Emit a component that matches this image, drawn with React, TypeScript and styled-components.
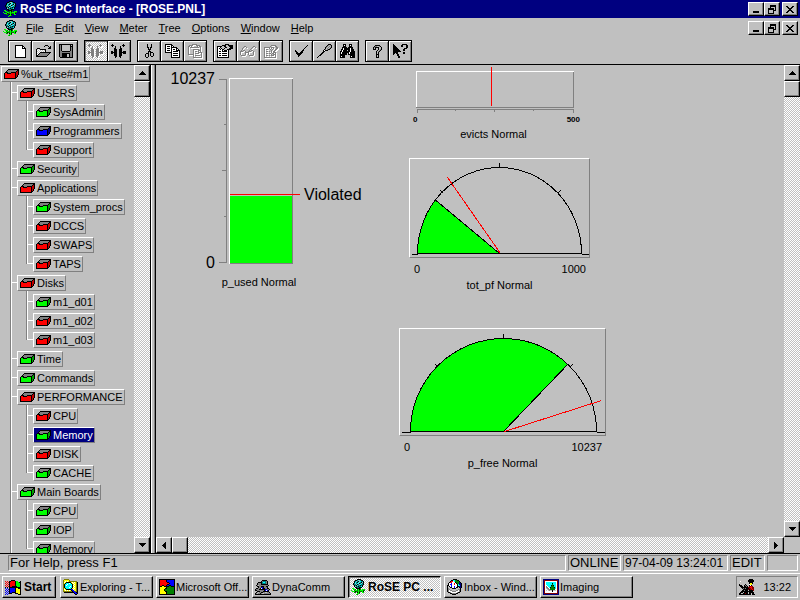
import React from "react";
import styled, { createGlobalStyle, css } from "styled-components";

const FACE = "#c0c0c0";
const SHADE = "#808080";
const NAVY = "#000080";
const LIME = "#00ff00";
const SANS = `"Liberation Sans", Arial, sans-serif`;

const Global = createGlobalStyle`
  *, *::before, *::after { box-sizing: border-box; }
  html, body { margin: 0; padding: 0; }
  body { background: ${FACE}; color: #000; font: 11px/16px ${SANS}; overflow: hidden; }
  button { font: inherit; color: inherit; margin: 0; padding: 0; border: 0; background: ${FACE}; border-radius: 0; }
  svg { display: block; flex: none; }
  ul { list-style: none; margin: 0; padding: 0; }
`;

const raised = css`
  border: 1px solid;
  border-color: #fff #000 #000 #fff;
  box-shadow: inset -1px -1px 0 ${SHADE};
`;
const sunken = css`
  border: 1px solid;
  border-color: ${SHADE} #fff #fff ${SHADE};
`;
const dither = css`
  background: repeating-conic-gradient(#fff 0 25%, ${FACE} 0 50%) 0 0 / 2px 2px;
`;

/* ---------- pixel drawings ---------- */

const PALETTE: Record<string, string> = {
  K: "#000", W: "#fff", G: SHADE, L: FACE, T: "#008080", C: "#80d0d0", A: "#00ffff",
  E: "#008000", M: LIME, R: "#ff0000", D: "#800000", B: "#0000ff", N: NAVY, Y: "#ffff00", O: "#808000",
};

interface SpriteProps { rows: string[]; colors?: Record<string, string> }

function Sprite({ rows, colors }: SpriteProps) {
  const width = Math.max(...rows.map((r) => r.length));
  const rects: React.ReactElement[] = [];
  rows.forEach((row, y) => {
    let x = 0;
    while (x < row.length) {
      const c = row[x];
      let end = x + 1;
      while (end < row.length && row[end] === c) end++;
      const fill = colors?.[c] ?? PALETTE[c];
      if (fill) rects.push(<rect key={`${x}-${y}`} x={x} y={y} width={end - x} height={1} fill={fill} />);
      x = end;
    }
  });
  return (
    <svg width={width} height={rows.length} shapeRendering="crispEdges" aria-hidden="true">{rects}</svg>
  );
}

const ROSE = [
  "......KKKK......",
  "....KKTCCTKK....",
  "...KTCTKCATTK...",
  "...KATKACTKCK...",
  "..KTCTACKTCTK...",
  "..KTTCKTCATTK...",
  "...KTKCTTKTK....",
  "...KCTTKTTAK....",
  "....KKTTKKK.....",
  ".MM..KKKKE......",
  "..MME.EMKE.MMM..",
  "M..EMMEMEMMMEE..",
  ".MMMKEEMEEEMK...",
  "...EE.KMK..MM...",
  "......MME.......",
  ".....ME.........",
];

const PAGE = [
  "KKKKKKKK...", "KWWWWWWKK..", "KWWWWWWKWK.", "KWWWWWWKKKK",
  ...Array(8).fill("KWWWWWWWWWK"), "KKKKKKKKKKK",
];
const OPEN = [
  "..........KKK....",
  ".........K...K.K.",
  "..............KK.",
  "..KKK........KKK.",
  ".KLWLKKKKKK......",
  ".KWLWLWLWLK......",
  ".KLWLWLWLWK......",
  ".KWLWKKKKKKKKKKK.",
  ".KLWKGGGGGGGGGK..",
  ".KWKGGGGGGGGGK...",
  ".KKGGGGGGGGGK....",
  ".KKKKKKKKKKK.....",
];
const SAVE = [
  "KKKKKKKKKKKKKK", "KGKLLLLLLLLKLK", "KGKLLLLLLLLKKK", "KGKLLLLLLLLKGK",
  "KGKLLLLLLLLKGK", "KGKLLLLLLLLKGK", "KGKLLLLLLLLKGK", "KGGKKKKKKKKGGK",
  "KGGGGGGGGGGGGK", "KGGKKKKKKKKGGK", "KGGKKKKKLLKGGK", "KGGKKKKKLLKGGK",
  "KGGKKKKKLLKGGK", ".KKKKKKKKKKKKK",
];
const PLUG = [
  ".X..........X...",
  "XXX........XXX..",
  ".X..X....X..X...",
  "....X....X......",
  "...XX....XX.....",
  "...XXX..XXX.....",
  "...XXX..XXX.....",
  "XX.XXX..XXX.XXX.",
  "XXXXXX..XXXXXXX.",
  "XX.XXX..XXX.XXX.",
  "...XXX..XXX.....",
  "...XXX..XXX.....",
  "....XX..XX......",
  "....X....X......",
];
const CUT = [
  "..K...K..", "..K...K..", "..K...K..", "..KK.KK..", "...K.K...", "...KKK...", "....K....",
  "...KKK...", "...K.KKK.", ".KKK.K..K", "K..K.K..K", "K..K.K..K", "K..K..KK.", ".KK......",
];
const COPY = [
  "KKKKKKK.......", "KWWWWWKK......", "KWKKKWKWK.....", "KWWWWWKKKKKK..", "KWKKKWKWWWWKK.",
  "KWWWWWKWKKWKWK", "KWKKKWKWWWWKKKK", "KWWWWWKWKKKKKWK", "KKKKKKKWWWWWWWK", "......KWKKKKKWK",
  "......KWWWWWWWK", "......KWKKKKKWK", "......KWWWWWWWK", "......KKKKKKKKK",
];
const PASTE = [
  "....GGGGG......", ".GGGG...GGGG...", "GG.G.....G.GG..", "G.GGGGGGGGG.G..", "G...........G..",
  "G....GGGGGG.G..", "G....G....GGG..", "G....G.GG.G.G..", "G....G....GGGG.", "G....G.GGGG..G.",
  "GGGGGG.......G.", ".....G.GGGGG.G.", ".....G.......G.", ".....GGGGGGGGG.",
];
const PROPS = [
  "........KKKK....",
  ".....KKKKLLKKKKK",
  "KKKKKLLKKLLLKKKK",
  "KWWKLLLLKKLLLKKK",
  "KWKLKLLKLLLLKKKK",
  "KWWKWKKLLLKKKK..",
  "KWWWWKWKKKWK....",
  "KWKKWKKKKKWK....",
  "KWWWWWWWWWWK....",
  "KWKKWKKKKKWK....",
  "KWWWWWWWWWWK....",
  "KWKKWKKKKKWK....",
  "KWWWWWWWWWWK....",
  "KKKKKKKKKKKK....",
];
const GLASSES = [
  "....GG.......GG.",
  "...G..G.....G..G",
  "..G........G....",
  "..G.......G.....",
  ".G.GG....G.GG...",
  "GGG..G..GGG..G..",
  "G....GGGG....G..",
  "G....G..G....G..",
  "G....G..G....G..",
  ".GGGG....GGGG...",
];
const QUERYFORM = [
  ".......GGGGG...",
  "......G....GG..",
  "GGGGGG.GGG..GG.",
  "G....G.G.G..GG.",
  "G.GG..G.G..GG..",
  "G......G..GG...",
  "G.GG.G.G.GG....",
  "G......G.GGG...",
  "G.GG.GG.GG.G...",
  "G......G.GGG...",
  "G.GG.G.GGG.G...",
  "G..........G...",
  "GGGGGGGGGGGG...",
];
const CHECK = [
  "............K", "...........K.", "..........K..", ".........K...", "........K....", "K......KK....",
  "KK....KK.....", ".KK..KKK.....", ".KKKKKK......", "..KKKK.......", "...KK........", "...K.........",
];
const DRIVER = [
  "...........KKK.", "..........KGLGK", ".........KGLGLK", "........KGLGLGK", "........KLGLGK.",
  ".......KGLGKK..", "......KWKKK....", "......KK.......", ".....KK........", "....KK.........",
  "...KK..........", "..KK...........", ".K.............", "K..............",
];
const BINOCULARS = [
  "...KKK...KKK...", "...KWK...KWK...", "...KKK...KKK...", "..KKKKK.KKKKK..", "..KWKKKKKKWKK..",
  ".KKWKKKKKKWKKK.", ".KWKKKK.KKWKKK.", "KKWKKKKKKKWKKKK", "KWKKKKKKKWKKKKK", "KWKKKKK.KWKKKKK",
  "KKKKKKK.KKKKKKK", "KKKKK.....KKKKK", "KWKKK.....KWKKK", "KKKKK.....KKKKK",
];
const HELP = [
  "...KKKKK..", "..KGGLLGK.", ".KGKKKKLLK", ".KLK..KLLK", ".KKK..KLGK", ".....KLGK.", "....KLGK..",
  "....KLK...", "....KLK...", "....KKK...", "....KLK...", "....KLK...", "....KKK...",
];
const CONTEXT = [
  "K........KKKKK.", "KK......KK...KK", "KKK.....KK...KK", "KKKK.........KK", "KKKKK......KKK.",
  "KKKKKK....KK...", "KKKKKKK...KK...", "KKKKKKKK.......", "KKKKK.....KK...", "KK.KK.....KK...",
  "K...KK.........", "....KK.........", ".....KK........", ".....KK........",
];

const TRAY_BOX = [
  "....KKKKKKKKKKK",
  "...KGGGGGGGGGKK",
  "..KGGGGGGGGGKdK",
  ".KKKGGGKKKKKddK",
  "KccKKKKccccKddK",
  "KccccccccccKddK",
  "KccccccccccKdK.",
  "KccccccccccKdK.",
  "KccccccccccKK..",
  "KKKKKKKKKKKK...",
];

const MIN = ["......", "......", "......", "......", "......", "......", "KKKKKK", "KKKKKK"];
const RESTORE = ["..KKKKKK", "..KKKKKK", "..K....K", "KKKKKK.K", "KKKKKK.K", "K....KKK", "K....K..", "K....K..", "KKKKKK.."];
const CLOSE = ["KK....KK", ".KK..KK.", "..KKKK..", "...KK...", "..KKKK..", ".KK..KK.", "KK....KK"];

const ARROWS: Record<string, string[]> = {
  up: ["...K...", "..KKK..", ".KKKKK.", "KKKKKKK"],
  down: ["KKKKKKK", ".KKKKK.", "..KKK..", "...K..."],
  left: ["...K", "..KK", ".KKK", "KKKK", ".KKK", "..KK", "...K"],
  right: ["K...", "KK..", "KKK.", "KKKK", "KKK.", "KK..", "K..."],
};

const FLAG = [
  "......KKKK......",
  "R.R.KKRRRRKMM..K",
  ".R.RKRRRRRKMMMKK",
  "R.R.KRRRRRKMMMMK",
  ".R.RKRRRRRKMMMMK",
  "R.R.KRRRRRKMMMMK",
  ".R.RKRRKKKKKMMMK",
  "K.K.KKKKKKKKKKKK",
  "B.B.KBBBBBKYYKKK",
  ".B.BKBBBBBKYYYYK",
  "B.B.KBBBBBKYYYYK",
  ".B.BKBBBBBKYYYYK",
  "B.B.KBBKKKKYYYYK",
  ".B.BKKK...KKKYYK",
  "B.B..........KKK",
];
const EXPLORER = [
  ".OOOOO..........",
  "OYYYYYO.........",
  "OYWYWYOOOOOOOO..",
  "OWYKKKKKYWYWYOK.",
  "OYKAAAWAKYWYYOK.",
  "OKAAWAAAAKYWYOK.",
  "OKAWAAAAAKWYYOK.",
  "OKAAAAAWAKYWYOK.",
  "OKAAAAWAAKWYYOK.",
  "OYKAAAAAKYYWYOK.",
  "OWYKKKKKBBWYYOK.",
  "OYWYWYWYKBBYYOK.",
  "OOOOOOOOOKBBOOK.",
  ".KKKKKKKKKKBBKK.",
  "...........KBBK.",
  "............KK..",
];
const PUZZLE = [
  "KKKKKKKKKKKKKKKK",
  "KRRRRRRKBBBBBBBK",
  "KRRRRRRKBBBBBBBK",
  "KRRRRRRRKKBBBBBK",
  "KRRRRRRRRRKBBBBK",
  "KRRRRRRRKKBBBBBK",
  "KRRKKRRKBBKKBBBK",
  "KKKYYKKKKKEEKKKK",
  "KYYYYYYKEEEEEEEK",
  "KYYYYYKKEEEEEEEK",
  "KYYYYKEEEEEEEEEK",
  "KYYYYKEEEEEEEEEK",
  "KYYYYYKKEEEEEEEK",
  "KYYYYYYKEEEEEEEK",
  "KYYYYYYKEEEEEEEK",
  "KKKKKKKKKKKKKKKK",
];
const DYNA = [
  ".......KKKKK....",
  "......KGTTTGK...",
  "...KKKKTAATGK...",
  "..KGGGKTTTTGK...",
  "..KGGGKKKKKKK...",
  ".KGLGGGGGGGGGK..",
  "..KKGGKKKGGKK...",
  "...KGGNBKGGGK...",
  ".KKGGKWBKKGGKK..",
  "KGGGKKKKKKNBGGK.",
  "KKGGGGGGGKBWBK..",
  "..KKKGGGKKKKKK..",
  ".KGLGGKKGGLLGGK.",
  "KGLGGKGLLGGGGGGK",
  "KKKKKKKKKKKKKKKK",
];
const INBOX = [
  "......KKKK......",
  "....KKAAEEKK....",
  "...KRRWAEEEEK...",
  "..KRRWWWKEEENK..",
  ".KWWBWWRWKEENNK.",
  ".KWBBWWRWWKANNK.",
  "KKWWBWWWWWKAANK.",
  "KLKWBWWBWWKKNNK.",
  "KLLKKWWBWKKLKNK.",
  "KGLLLKKKKLLLLK..",
  "KGGLLLLLLLLGGK..",
  "KGWGGLLLLGGWGK..",
  "KGWWWGGGGWWWGK..",
  ".KKGWWWWWWGKK...",
  "...KKGGGGKK.....",
  ".....KKKK.......",
];
const IMAGING = [
  "NNNNNNNNNNNNNNNN",
  "NDDDDDDDDDDDDDDN",
  "NDWWWWWWWWWWWWDN",
  "NDWAAAAAAAAAAWDN",
  "NDWAAAAAAKAAAWDN",
  "NDWAAAAAAEAAAWDN",
  "NDWWAAAAKEKAAWDN",
  "NDWGWAAAEEEAAWDN",
  "NDWGGWAKEEEKAWDN",
  "NDWLGGWEEEEEAWDN",
  "NDWWLGGEEEEEWWDN",
  "NDWLWLGLLKLLLWDN",
  "NDWWWWWWWKWWWWDN",
  "NDWWWWWWWWWWWWDN",
  "NDDDDDDDDDDDDDDN",
  "NNNNNNNNNNNNNNNN",
];
const AGENT = [
  "..........KKKK..",
  "L........KKKKKK.",
  "LW.......KKKKKK.",
  "..........KKKK..",
  "..........KYYK..",
  "K.....K...WYY...",
  "KKK..KGK..KWK...",
  ".KKK.KKGK.DDRD..",
  "..KKKKKKKDDRRDD.",
  "...KGKGKKKDDRDD.",
  "....KKKKKDKDDRD.",
  "...KKGKKK.KKKKD.",
  "..KKKKKKKKKKKK..",
  ".KKK.KKKK.KKKKK.",
  "KK..KKDKK.KK.KK.",
  "KKKKKKKKKKKK.KKK",
];

/* ---------- shell ---------- */

const Shell = styled.div`
  display: flex;
  flex-direction: column;
  height: 100vh;
`;

const TitleBar = styled.header`
  display: flex;
  align-items: center;
  height: 18px;
  padding: 0 2px 0 3px;
  gap: 1px;
  background: ${NAVY};
  color: #fff;
`;

const Title = styled.h1`
  flex: 1;
  margin: 0;
  font: bold 12px/16px ${SANS};
`;

const WindowButtons = styled.div`
  display: flex;
`;

const WindowButton = styled.button<{ $apart?: boolean }>`
  ${raised}
  display: grid;
  place-items: center;
  width: 16px;
  height: 14px;
  margin-left: ${(p) => (p.$apart ? 2 : 0)}px;
  overflow: hidden;
`;

const MenuBar = styled.nav`
  display: flex;
  align-items: center;
  height: 20px;
  padding: 0 2px 0 3px;
`;

const Menus = styled.div`
  display: flex;
  flex: 1;
  gap: 11px;
  padding-left: 7px;
`;

const MenuItem = styled.button`
  background: none;
  &::first-letter { text-decoration: underline; }
`;

const Toolbar = styled.div`
  display: flex;
  gap: 6px;
  height: 26px;
  padding: 2px 8px;
`;

const ToolGroup = styled.div`
  display: flex;
`;

const Tool = styled.button<{ $pressed?: boolean }>`
  display: grid;
  place-items: center;
  width: 24px;
  height: 22px;
  border: 1px solid #000;
  box-shadow: inset 1px 1px 0 #fff, inset -1px -1px 0 ${SHADE};
  & + & { margin-left: -1px; }
  &:disabled svg { filter: drop-shadow(1px 1px 0 #fff); }
  ${(p) => p.$pressed && css`${dither} box-shadow: inset 1px 1px 0 ${SHADE};`}
`;

const Workspace = styled.div`
  display: flex;
  flex: 1;
  min-height: 0;
  border-top: 1px solid #000;
  border-bottom: 1px solid #000;
`;

const TreePane = styled.aside`
  display: flex;
  width: 150px;
  flex: none;
`;

const Splitter = styled.div`
  flex: none;
  width: 6px;
  border-left: 1px solid #000;
  border-right: 1px solid #000;
  background: linear-gradient(90deg, #fff 1px, ${FACE} 1px 3px, ${SHADE} 3px);
`;

/* ---------- scroll bars ---------- */

const Track = styled.div<{ $row?: boolean }>`
  ${dither}
  display: flex;
  flex: ${(p) => (p.$row ? "1" : "none")};
  flex-direction: ${(p) => (p.$row ? "row" : "column")};
  & > :last-child { margin-${(p) => (p.$row ? "left" : "top")}: auto; }
`;

const ScrollButton = styled.button`
  ${raised}
  display: grid;
  place-items: center;
  flex: none;
  width: 16px;
  height: 16px;
`;

function ScrollBar({ row, label }: { row?: boolean; label: string }) {
  return (
    <Track $row={row}>
      <ScrollButton aria-label={`${label} back`}><Sprite rows={ARROWS[row ? "left" : "up"]} /></ScrollButton>
      <ScrollButton aria-label={`${label} thumb`} />
      <ScrollButton aria-label={`${label} forward`}><Sprite rows={ARROWS[row ? "right" : "down"]} /></ScrollButton>
    </Track>
  );
}

/* ---------- tree ---------- */

const TreeList = styled.ul`
  flex: 1;
  min-width: 0;
  overflow: hidden;
  padding-left: 1px;
`;

const TreeRow = styled.li`
  display: flex;
  align-items: flex-end;
  height: 19px;
  &:first-child { height: 17px; }
`;

type GuideKind = "pass" | "branch" | "last";

const Guide = styled.span<{ $kind: GuideKind }>`
  flex: none;
  align-self: stretch;
  width: 16px;
  background-repeat: no-repeat;
  background-image:
    linear-gradient(90deg, ${SHADE} 1px, #fff 1px),
    linear-gradient(#fff, #fff);
  background-position: 9px 0, 10px 10px;
  background-size: 2px ${(p) => (p.$kind === "last" ? "11px" : "100%")}, ${(p) => (p.$kind === "pass" ? "0 0" : "6px 1px")};
`;

const Node = styled.button<{ $selected?: boolean }>`
  display: flex;
  align-items: center;
  gap: 2px;
  height: 16px;
  padding: 0 1px 0 2px;
  border: 1px solid;
  border-color: #fff ${SHADE} ${SHADE} #fff;
  white-space: nowrap;
  line-height: 16px;
  ${(p) => p.$selected && css`background: ${NAVY}; color: #fff;`}
`;

type State = "red" | "green" | "blue";
const BOX_COLORS: Record<State, Record<string, string>> = {
  red: { c: "#ff0000", d: "#c00000" },
  green: { c: LIME, d: "#00a000" },
  blue: { c: "#0000ff", d: "#000080" },
};

interface TreeItem { level: number; name: string; state: State; selected?: boolean }

const TREE: TreeItem[] = [
  { level: 0, name: "%uk_rtse#m1", state: "red" },
  { level: 1, name: "USERS", state: "red" },
  { level: 2, name: "SysAdmin", state: "green" },
  { level: 2, name: "Programmers", state: "blue" },
  { level: 2, name: "Support", state: "red" },
  { level: 1, name: "Security", state: "green" },
  { level: 1, name: "Applications", state: "red" },
  { level: 2, name: "System_procs", state: "green" },
  { level: 2, name: "DCCS", state: "red" },
  { level: 2, name: "SWAPS", state: "red" },
  { level: 2, name: "TAPS", state: "red" },
  { level: 1, name: "Disks", state: "red" },
  { level: 2, name: "m1_d01", state: "green" },
  { level: 2, name: "m1_d02", state: "red" },
  { level: 2, name: "m1_d03", state: "red" },
  { level: 1, name: "Time", state: "green" },
  { level: 1, name: "Commands", state: "green" },
  { level: 1, name: "PERFORMANCE", state: "red" },
  { level: 2, name: "CPU", state: "red" },
  { level: 2, name: "Memory", state: "green", selected: true },
  { level: 2, name: "DISK", state: "red" },
  { level: 2, name: "CACHE", state: "green" },
  { level: 1, name: "Main Boards", state: "green" },
  { level: 2, name: "CPU", state: "green" },
  { level: 2, name: "IOP", state: "green" },
  { level: 2, name: "Memory", state: "green" },
];

function Tree() {
  return (
    <TreeList role="tree" aria-label="System objects">
      {TREE.map((item, i) => (
        <TreeRow key={i} role="treeitem" aria-level={item.level + 1} aria-selected={!!item.selected}>
          {item.level > 0 && <Guide $kind={item.level === 1 ? "branch" : "pass"} />}
          {item.level > 1 && <Guide $kind={TREE[i + 1]?.level === 2 ? "branch" : "last"} />}
          <Node $selected={item.selected}>
            <Sprite rows={TRAY_BOX} colors={BOX_COLORS[item.state]} />
            {item.name}
          </Node>
        </TreeRow>
      ))}
    </TreeList>
  );
}

/* ---------- meter canvas ---------- */

const View = styled.main`
  display: flex;
  flex-direction: column;
  flex: 1;
  min-width: 0;
`;

const ViewRow = styled.div<{ $grow?: boolean }>`
  display: flex;
  flex: ${(p) => (p.$grow ? "1" : "none")};
  min-height: 0;
`;

const Corner = styled.div`
  width: 16px;
  height: 16px;
`;

const Canvas = styled.div`
  position: relative;
  flex: 1;
  overflow: hidden;
`;

/* Meters are dropped anywhere on the panel, so each carries its own place. */
const Meter = styled.figure<{ $x: number; $y: number }>`
  position: absolute;
  left: ${(p) => p.$x}px;
  top: ${(p) => p.$y}px;
  margin: 0;
  display: flex;
  flex-direction: column;
`;

const Caption = styled.figcaption`
  text-align: center;
  white-space: nowrap;
`;

const Panel = styled.div`
  border: 1px solid;
  border-color: #fff ${SHADE} ${SHADE} #fff;
`;

const Range = styled.div`
  display: flex;
  justify-content: space-between;
  padding: 4px 4px 0 5px;
  line-height: 15px;
`;

const StripRange = styled(Range)`
  margin: 0 -6px 0 -3px;
  padding: 0;
  font: bold 8px/13px ${SANS};
`;

const BarBody = styled.div`
  display: flex;
  gap: 4px;
  font: 16px/18px ${SANS};
`;

const BarScale = styled.div`
  display: flex;
  flex-direction: column;
  justify-content: space-between;
  align-items: flex-end;
  width: 50px;
  height: 202px;
`;

const BarNote = styled.div`
  align-self: flex-start;
  padding-top: 116px;
`;

function ColumnMeter() {
  return (
    <Meter $x={9} $y={5}>
      <BarBody>
        <BarScale><span>10237</span><span>0</span></BarScale>
        <svg width="81" height="202" shapeRendering="crispEdges" aria-hidden="true">
          <g fill={SHADE}>
            <rect x="7" y="9" width="1" height="184" />
            <rect x="0" y="9" width="8" height="1" />
            <rect x="5" y="54" width="3" height="1" />
            <rect x="3" y="100" width="5" height="1" />
            <rect x="5" y="146" width="3" height="1" />
            <rect x="0" y="192" width="8" height="1" />
            <rect x="73" y="8" width="1" height="186" />
            <rect x="10" y="193" width="64" height="1" />
          </g>
          <rect x="10" y="8" width="64" height="1" fill="#fff" />
          <rect x="10" y="8" width="1" height="186" fill="#fff" />
          <rect x="11" y="126" width="62" height="67" fill={LIME} />
          <rect x="11" y="124" width="70" height="1" fill="#f00" />
        </svg>
        <BarNote>Violated</BarNote>
      </BarBody>
      <ColumnCaption>p_used Normal</ColumnCaption>
    </Meter>
  );
}

const ColumnCaption = styled(Caption)`
  width: 188px;
  padding-top: 2px;
`;

const StripCaption = styled(Caption)`
  padding-right: 3px;
`;

function StripMeter() {
  return (
    <Meter $x={260} $y={2}>
      <svg width="158" height="46" shapeRendering="crispEdges" aria-hidden="true">
        <g fill={SHADE}>
          <rect x="157" y="4" width="1" height="37" />
          <rect x="0" y="40" width="158" height="1" />
          <rect x="1" y="42" width="157" height="1" />
          <rect x="1" y="42" width="1" height="4" />
          <rect x="39" y="42" width="1" height="2" />
          <rect x="78" y="42" width="1" height="3" />
          <rect x="117" y="42" width="1" height="2" />
          <rect x="157" y="42" width="1" height="4" />
        </g>
        <rect x="0" y="4" width="158" height="1" fill="#fff" />
        <rect x="0" y="4" width="1" height="36" fill="#fff" />
        <rect x="75" y="0" width="1" height="39" fill="#f00" />
      </svg>
      <StripRange><span>0</span><span>500</span></StripRange>
      <StripCaption>evicts Normal</StripCaption>
    </Meter>
  );
}

interface DialProps {
  x: number; y: number; width: number; height: number;
  cx: number; base: number; rx: number; ry: number;
  fraction: number; limit: [number, number];
  ticks: [number, number, number];
  max: string; name: string;
}

function DialMeter(p: DialProps) {
  const left = p.cx - p.rx;
  const right = p.cx + p.rx;
  const [tl, tr, ty] = p.ticks;
  const angle = p.fraction * Math.PI;
  const vx = p.cx - p.rx * Math.cos(angle);
  const vy = p.base - p.ry * Math.sin(angle);
  return (
    <Meter $x={p.x} $y={p.y}>
      <Panel>
        <svg width={p.width} height={p.height} shapeRendering="crispEdges" fill="none" stroke="#000" aria-hidden="true">
          <g transform="translate(0.5 0.5)">
            <path
              d={`M${p.cx} ${p.base}H${left}A${p.rx} ${p.ry} 0 0 1 ${vx} ${vy}Z`}
              fill={LIME}
              stroke="none"
            />
            <path d={`M${p.cx} ${p.base}L${vx} ${vy}`} />
            <path d={`M${left} ${p.base}A${p.rx} ${p.ry} 0 0 1 ${right} ${p.base}Z`} />
            <path d={`M1 ${p.base + 1}H${left}M${right} ${p.base + 1}H${p.width - 1}`} />
            <path d={`M${p.cx} ${p.base - p.ry}v-5M${tl} ${ty}l3 3M${tr} ${ty}l-3 3`} />
            <path d={`M${p.cx + 1} ${p.base}L${p.limit[0]} ${p.limit[1]}`} stroke="#f00" />
          </g>
        </svg>
      </Panel>
      <Range><span>0</span><span>{p.max}</span></Range>
      <Caption>{p.name}</Caption>
    </Meter>
  );
}

/* ---------- status bar and task bar ---------- */

const StatusBar = styled.footer`
  display: flex;
  gap: 2px;
  height: 19px;
  padding: 1px 2px 2px 8px;
  font: 13px/14px ${SANS};
`;

const Pane = styled.div<{ $width?: number }>`
  ${sunken}
  flex: ${(p) => (p.$width ? "none" : "1")};
  width: ${(p) => (p.$width ? `${p.$width}px` : "auto")};
  padding-left: 1px;
  white-space: nowrap;
  overflow: hidden;
`;

const ClockPane = styled(Pane)`
  font-size: 12px;
`;

const TaskBar = styled.nav`
  display: flex;
  gap: 3px;
  height: 27px;
  padding: 2px 2px;
  border-top: 1px solid #fff;
`;

const Task = styled.button<{ $active?: boolean }>`
  ${raised}
  display: flex;
  align-items: center;
  gap: 1px;
  flex: 0 1 93px;
  min-width: 0;
  height: 22px;
  padding: 0 0 0 2px;
  text-align: left;
  white-space: nowrap;
  ${(p) => p.$active && css`
    ${dither}
    border-color: #000 #fff #fff #000;
    box-shadow: inset 1px 1px 0 ${SHADE};
    font-weight: bold;
    font-size: 12px;
  `}
`;

const Start = styled(Task)`
  flex: none;
  width: 54px;
  gap: 3px;
  margin-right: 1px;
  font-weight: bold;
  font-size: 12px;
`;

const Tray = styled.div`
  ${sunken}
  display: flex;
  align-items: center;
  justify-content: space-between;
  width: 62px;
  height: 22px;
  margin-left: auto;
  padding: 0 6px 0 2px;
`;

const MENUS = ["File", "Edit", "View", "Meter", "Tree", "Options", "Window", "Help"];

interface ToolSpec { label: string; rows: string[]; disabled?: boolean; pressed?: boolean; colors?: Record<string, string> }

const TOOLS: ToolSpec[][] = [
  [{ label: "New", rows: PAGE }, { label: "Open", rows: OPEN }, { label: "Save", rows: SAVE }],
  [
    { label: "Connect", rows: PLUG, colors: { X: SHADE }, pressed: true, disabled: true },
    { label: "Disconnect", rows: PLUG, colors: { X: "#000" } },
  ],
  [{ label: "Cut", rows: CUT }, { label: "Copy", rows: COPY }, { label: "Paste", rows: PASTE, disabled: true }],
  [
    { label: "Properties", rows: PROPS },
    { label: "Inspect", rows: GLASSES, disabled: true },
    { label: "Query", rows: QUERYFORM, disabled: true },
  ],
  [{ label: "Accept", rows: CHECK }, { label: "Adjust", rows: DRIVER }, { label: "Find", rows: BINOCULARS }],
  [{ label: "Help", rows: HELP }, { label: "Context help", rows: CONTEXT }],
];

const TASKS = [
  { name: "Exploring - T...", rows: EXPLORER },
  { name: "Microsoft Off...", rows: PUZZLE },
  { name: "DynaComm", rows: DYNA },
  { name: "RoSE PC ...", rows: ROSE, active: true },
  { name: "Inbox - Wind...", rows: INBOX },
  { name: "Imaging", rows: IMAGING },
];

function Controls({ target }: { target: string }) {
  return (
    <WindowButtons>
      <WindowButton aria-label={`Minimize ${target}`}><Sprite rows={MIN} /></WindowButton>
      <WindowButton aria-label={`Restore ${target}`}><Sprite rows={RESTORE} /></WindowButton>
      <WindowButton $apart aria-label={`Close ${target}`}><Sprite rows={CLOSE} /></WindowButton>
    </WindowButtons>
  );
}

export default function App() {
  return (
    <Shell>
      <Global />
      <TitleBar>
        <Sprite rows={ROSE} />
        <Title>RoSE PC Interface - [ROSE.PNL]</Title>
        <Controls target="application" />
      </TitleBar>
      <MenuBar>
        <Sprite rows={ROSE} />
        <Menus>{MENUS.map((m) => <MenuItem key={m}>{m}</MenuItem>)}</Menus>
        <Controls target="document" />
      </MenuBar>
      <Toolbar role="toolbar">
        {TOOLS.map((group, i) => (
          <ToolGroup key={i}>
            {group.map((t) => (
              <Tool key={t.label} aria-label={t.label} disabled={t.disabled} $pressed={t.pressed}>
                <Sprite rows={t.rows} colors={t.colors} />
              </Tool>
            ))}
          </ToolGroup>
        ))}
      </Toolbar>
      <Workspace>
        <TreePane>
          <Tree />
          <ScrollBar label="Tree scroll" />
        </TreePane>
        <Splitter />
        <View>
          <ViewRow $grow>
            <Canvas>
              <ColumnMeter />
              <StripMeter />
              <DialMeter
                x={253} y={93} width={179} height={98} cx={89} base={94} rx={82} ry={86}
                fraction={0.214} limit={[37, 18]} ticks={[30, 150, 31]} max="1000" name="tot_pf Normal"
              />
              <DialMeter
                x={243} y={263} width={205} height={106} cx={103} base={102} rx={93} ry={93}
                fraction={0.743} limit={[201, 71]} ticks={[35, 172, 35]} max="10237" name="p_free Normal"
              />
            </Canvas>
            <ScrollBar label="Vertical scroll" />
          </ViewRow>
          <ViewRow>
            <ScrollBar row label="Horizontal scroll" />
            <Corner />
          </ViewRow>
        </View>
      </Workspace>
      <StatusBar>
        <Pane>For Help, press F1</Pane>
        <Pane $width={53}>ONLINE</Pane>
        <ClockPane $width={105}>97-04-09 13:24:01</ClockPane>
        <Pane $width={35}>EDIT</Pane>
        <Pane $width={31} />
      </StatusBar>
      <TaskBar>
        <Start><Sprite rows={FLAG} />Start</Start>
        {TASKS.map((t) => (
          <Task key={t.name} $active={t.active}><Sprite rows={t.rows} />{t.name}</Task>
        ))}
        <Tray><Sprite rows={AGENT} /><time>13:22</time></Tray>
      </TaskBar>
    </Shell>
  );
}
